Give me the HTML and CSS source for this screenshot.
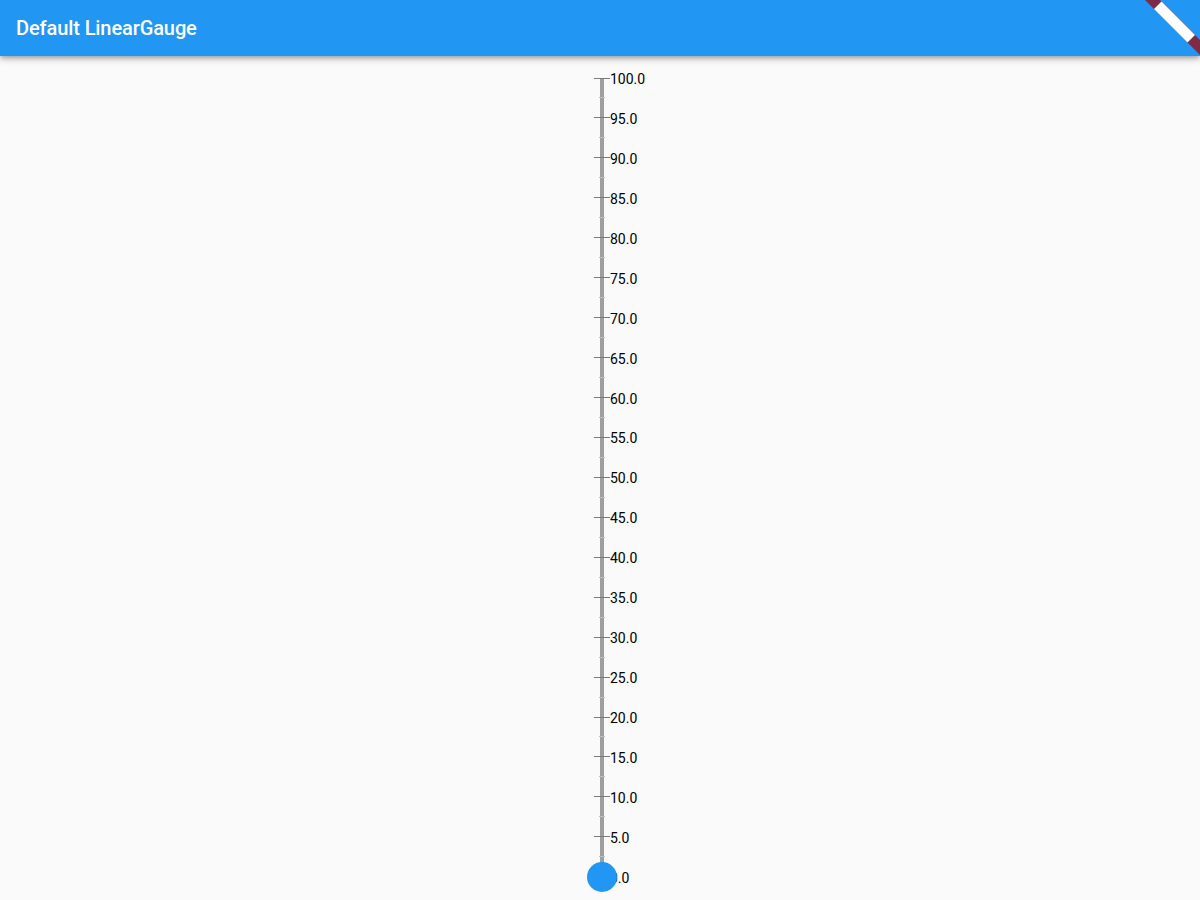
FILE: index.html
```html
<!DOCTYPE html>
<html>
<head>
<meta charset="utf-8">
<link rel="stylesheet" href="styles.css">
</head>
<body>
<header class="appbar">
  <h1 class="title">Default LinearGauge</h1>
  <svg class="banner" width="60" height="56" viewBox="1140 0 60 56">
    <polygon points="1145,0 1160,0 1200,40 1200,55" fill="#7e2b47"/>
    <polygon points="1154,9 1161.5,1.5 1195,35 1187.5,42.5" fill="#ffffff"/>
  </svg>
</header>
<main class="main">
  <div class="gauge">
    <div class="row"><span class="major"></span><span class="label">100.0</span></div>
    <div class="row"><span class="minor"></span></div>
    <div class="row"><span class="major"></span><span class="label">95.0</span></div>
    <div class="row"><span class="minor"></span></div>
    <div class="row"><span class="major"></span><span class="label">90.0</span></div>
    <div class="row"><span class="minor"></span></div>
    <div class="row"><span class="major"></span><span class="label">85.0</span></div>
    <div class="row"><span class="minor"></span></div>
    <div class="row"><span class="major"></span><span class="label">80.0</span></div>
    <div class="row"><span class="minor"></span></div>
    <div class="row"><span class="major"></span><span class="label">75.0</span></div>
    <div class="row"><span class="minor"></span></div>
    <div class="row"><span class="major"></span><span class="label">70.0</span></div>
    <div class="row"><span class="minor"></span></div>
    <div class="row"><span class="major"></span><span class="label">65.0</span></div>
    <div class="row"><span class="minor"></span></div>
    <div class="row"><span class="major"></span><span class="label">60.0</span></div>
    <div class="row"><span class="minor"></span></div>
    <div class="row"><span class="major"></span><span class="label">55.0</span></div>
    <div class="row"><span class="minor"></span></div>
    <div class="row"><span class="major"></span><span class="label">50.0</span></div>
    <div class="row"><span class="minor"></span></div>
    <div class="row"><span class="major"></span><span class="label">45.0</span></div>
    <div class="row"><span class="minor"></span></div>
    <div class="row"><span class="major"></span><span class="label">40.0</span></div>
    <div class="row"><span class="minor"></span></div>
    <div class="row"><span class="major"></span><span class="label">35.0</span></div>
    <div class="row"><span class="minor"></span></div>
    <div class="row"><span class="major"></span><span class="label">30.0</span></div>
    <div class="row"><span class="minor"></span></div>
    <div class="row"><span class="major"></span><span class="label">25.0</span></div>
    <div class="row"><span class="minor"></span></div>
    <div class="row"><span class="major"></span><span class="label">20.0</span></div>
    <div class="row"><span class="minor"></span></div>
    <div class="row"><span class="major"></span><span class="label">15.0</span></div>
    <div class="row"><span class="minor"></span></div>
    <div class="row"><span class="major"></span><span class="label">10.0</span></div>
    <div class="row"><span class="minor"></span></div>
    <div class="row"><span class="major"></span><span class="label">5.0</span></div>
    <div class="row"><span class="minor"></span></div>
    <div class="row"><span class="major"></span><span class="label">0.0</span><span class="pointer"></span></div>
  </div>
</main>
</body>
</html>
```
FILE: styles.css
```css
html, body {
  margin: 0;
  padding: 0;
}
body {
  background: #fafafa;
  font-family: Roboto, "Liberation Sans", sans-serif;
  width: 1200px;
  height: 900px;
  overflow: hidden;
}
.appbar {
  position: relative;
  z-index: 2;
  height: 56px;
  background: #2196f3;
  display: flex;
  align-items: center;
  padding: 0 16px;
  box-shadow: 0 2px 4px -1px rgba(0,0,0,0.2), 0 4px 5px 0 rgba(0,0,0,0.14), 0 1px 10px 0 rgba(0,0,0,0.12);
}
.title {
  margin: 0;
  color: #fff;
  font-size: 20px;
  font-weight: 500;
  letter-spacing: -0.1px;
  line-height: 1;
}
.banner {
  position: absolute;
  top: 0;
  right: 0;
}
.main {
  padding-left: 594px;
  padding-top: 22px;
}
.gauge {
  height: 799px;
  width: 60px;
  display: flex;
  flex-direction: column;
  justify-content: space-between;
  background: linear-gradient(#9e9e9e, #9e9e9e) no-repeat 6px 0 / 4px 100%;
}
.row {
  position: relative;
  height: 0;
  display: flex;
  align-items: center;
}
.major {
  flex: none;
  width: 16px;
  height: 1px;
  background: #7a7a7a;
}
.minor {
  flex: none;
  margin-left: 5px;
  width: 6px;
  height: 1px;
  background: #bdbdbd;
}
.label {
  font-size: 14px;
  color: #000;
  white-space: nowrap;
  line-height: 16px;
  padding-top: 2px;
}
.pointer {
  position: absolute;
  left: -7px;
  top: -15px;
  width: 30px;
  height: 30px;
  border-radius: 50%;
  background: #2196f3;
}
```
